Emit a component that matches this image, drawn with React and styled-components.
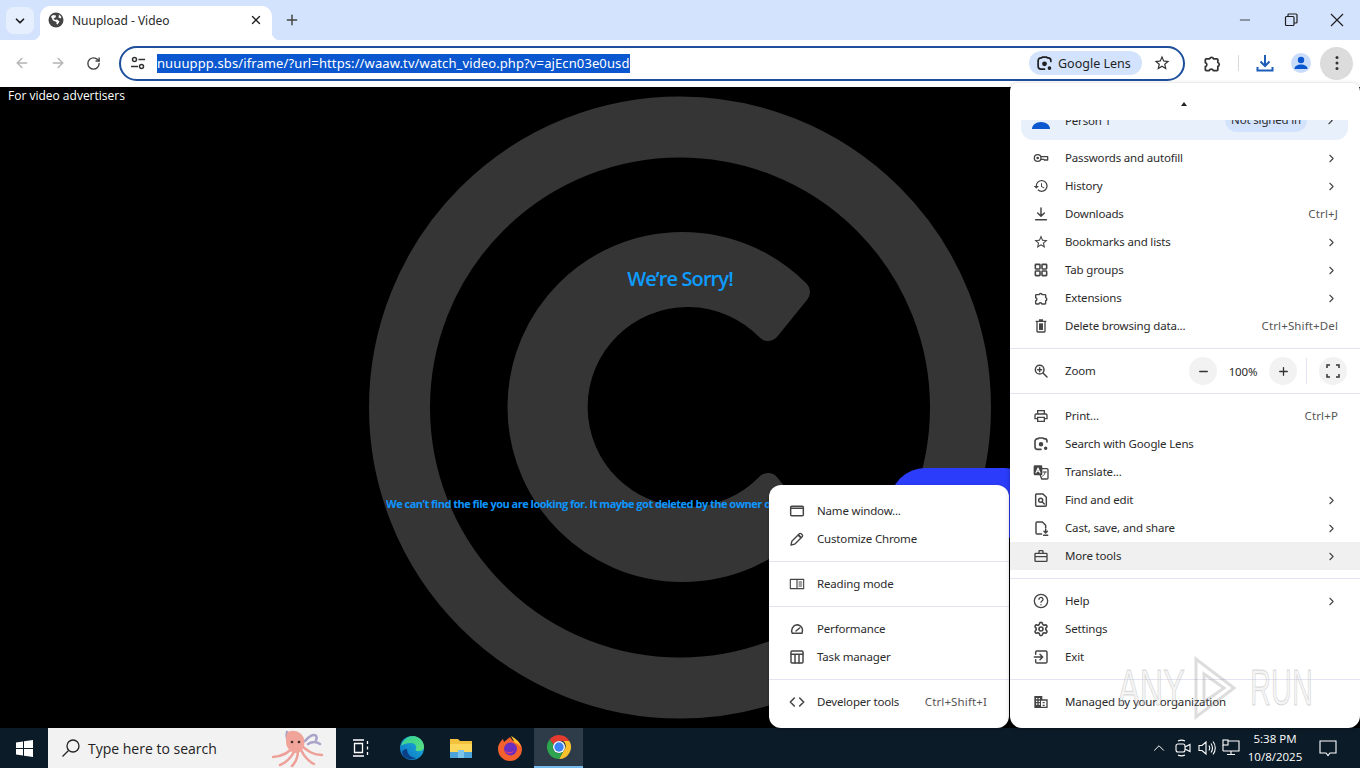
import React from "react";
import styled, { createGlobalStyle } from "styled-components";
import {
  ArrowLeft,
  ArrowRight,
  ChevronDown,
  ChevronRight,
  ChevronUp,
  Minus,
  Plus,
  RotateCw,
  Settings,
  X,
} from "lucide-react";

const UI_FONT = `"Noto Sans", "Open Sans", sans-serif`;

const GlobalStyle = createGlobalStyle`
  html, body { margin: 0; padding: 0; background: #000; }
  body { font-family: ${UI_FONT}; }
  * { box-sizing: border-box; }
`;

const Screen = styled.div`
  position: relative;
  width: 1360px;
  height: 768px;
  overflow: hidden;
  display: flex;
  flex-direction: column;
`;

/* tab strip */
const TabStrip = styled.div`
  height: 40px;
  background: #d3e3fd;
  display: flex;
  align-items: flex-end;
  padding-left: 6px;
  flex: none;
`;
const TabSearch = styled.div`
  width: 28px;
  height: 27px;
  margin-bottom: 6px;
  border-radius: 8px;
  background: #e6effd;
  display: flex;
  align-items: center;
  justify-content: center;
  color: #1f1f1f;
`;
const Tab = styled.div`
  position: relative;
  width: 232px;
  height: 34px;
  margin-left: 6px;
  background: #fff;
  border-radius: 10px 10px 0 0;
  display: flex;
  align-items: center;
  padding: 0 9px 6px 8px;
  font-size: 12px;
  color: #2a2a2a;
  &::before,
  &::after {
    content: "";
    position: absolute;
    bottom: 0;
    width: 8px;
    height: 8px;
  }
  &::before {
    left: -8px;
    background: radial-gradient(circle at 0 0, #d3e3fd 8px, #fff 8.5px);
  }
  &::after {
    right: -8px;
    background: radial-gradient(circle at 100% 0, #d3e3fd 8px, #fff 8.5px);
  }
`;
const TabTitle = styled.span`
  flex: 1;
  margin-left: 8px;
`;
const NewTab = styled.div`
  margin: 0 0 12px 12px;
  color: #444;
  display: flex;
`;
const WindowControls = styled.div`
  margin-left: auto;
  align-self: stretch;
  display: flex;
  align-items: center;
  gap: 31px;
  padding-right: 15px;
  color: #1f1f1f;
`;

/* toolbar */
const Toolbar = styled.div`
  height: 47px;
  background: #fff;
  display: flex;
  align-items: center;
  padding: 0 7px 1px 14px;
  flex: none;
`;
const NavButton = styled.div`
  width: 16px;
  margin-right: 20px;
  display: flex;
  justify-content: center;
  color: ${(p) => (p.$off ? "#b3b3b3" : "#444")};
`;
const Omnibox = styled.div`
  width: 1068px;
  height: 35px;
  margin-left: -3px;
  border: 2px solid #1d4f9c;
  border-radius: 18px;
  display: flex;
  align-items: center;
  padding: 0 12px 0 9px;
`;
const UrlText = styled.span`
  margin-left: 11px;
  height: 19px;
  line-height: 19px;
  background: #0b57d0;
  color: #fff;
  font-size: 13px;
  letter-spacing: 0.11px;
  white-space: nowrap;
`;
const LensChip = styled.div`
  margin-left: auto;
  height: 24px;
  width: 113px;
  border-radius: 12px;
  background: #d3e3fd;
  display: flex;
  align-items: center;
  gap: 5px;
  padding-left: 7px;
  font-size: 12.5px;
  color: #1f1f1f;
`;
const StarSlot = styled.div`
  margin-left: 11px;
  display: flex;
  color: #333;
`;
const ToolActions = styled.div`
  display: flex;
  align-items: center;
  margin-left: 17px;
  color: #333;
`;
const ActionDivider = styled.div`
  width: 1px;
  height: 16px;
  background: #d9d9d9;
  margin: 0 17px 0 16px;
`;
const Avatar = styled.div`
  width: 20px;
  height: 20px;
  border-radius: 50%;
  background: #c9dcf9;
  margin-left: 17px;
  display: flex;
  align-items: center;
  justify-content: center;
  color: #0b57d0;
`;
const KebabButton = styled.div`
  width: 33px;
  height: 33px;
  border-radius: 50%;
  background: #dcdcdc;
  margin-left: 9px;
  display: flex;
  align-items: center;
  justify-content: center;
`;

/* page */
const Page = styled.div`
  position: relative;
  flex: 1;
  background: #000;
  overflow: hidden;
  font-family: "Open Sans", sans-serif;
`;
const AdLabel = styled.div`
  position: relative;
  padding: 1px 0 0 8px;
  color: #fff;
  font-size: 12px;
  line-height: 16px;
`;
const CopyrightMark = styled.svg`
  position: absolute;
  left: 0;
  top: 0;
  width: 1360px;
  height: 641px;
`;
const Sorry = styled.h1`
  position: relative;
  margin: 165px 0 0;
  text-align: center;
  color: #0d9cff;
  font-size: 20px;
  line-height: 20px;
  font-weight: 600;
  letter-spacing: -0.9px;
`;
const Message = styled.p`
  position: relative;
  margin: 207px auto 0;
  width: 588px;
  white-space: nowrap;
  overflow: hidden;
  color: #0d96ff;
  font-size: 11px;
  line-height: 16px;
  font-weight: 700;
  letter-spacing: -0.5px;
`;
const RetryBlob = styled.div`
  position: absolute;
  left: 890px;
  top: 381px;
  width: 150px;
  height: 70px;
  border-radius: 35px;
  background: #2b3dfb;
`;

/* menus */
const MainMenu = styled.div`
  position: absolute;
  left: 1010px;
  top: 83px;
  width: 350px;
  height: 645px;
  background: #fff;
  border-radius: 8px 8px 12px 12px;
  color: #2b2b2b;
  font-size: 11.5px;
  letter-spacing: -0.17px;
  box-shadow: 0 1px 4px rgba(0, 0, 0, 0.3);
`;
const SubMenu = styled.div`
  position: absolute;
  left: 769px;
  top: 485px;
  width: 240px;
  height: 243px;
  padding: 12px 0;
  background: #fff;
  border-radius: 12px;
  color: #2b2b2b;
  font-size: 11.5px;
  letter-spacing: -0.17px;
  box-shadow: 0 1px 3px rgba(0, 0, 0, 0.3);
`;
const ScrollUp = styled.div`
  height: 37px;
  padding-top: 19px;
  display: flex;
  justify-content: center;
  & > i {
    width: 0;
    height: 0;
    border: 3.5px solid transparent;
    border-top: 0;
    border-bottom: 4px solid #222;
    margin-left: -2px;
  }
`;
const MenuBody = styled.div`
  height: 608px;
  overflow: hidden;
`;
const ProfileRow = styled.div`
  height: 40px;
  margin: -20px 12px 4px 11px;
  padding: 0 11px 0 11px;
  border-radius: 12px;
  background: #e8f0fb;
  display: flex;
  align-items: center;
`;
const ProfileName = styled.span`
  margin-left: 15px;
  flex: 1;
`;
const ProfileBadge = styled.span`
  height: 24px;
  line-height: 23px;
  padding: 0 6px;
  margin-right: 17px;
  border-radius: 12px;
  background: #d3e3fd;
`;
const Row = styled.div`
  height: 28px;
  display: flex;
  align-items: center;
  padding: ${(p) => (p.$sub ? "0 22px 0 20px" : "0 22px 0 23px")};
  background: ${(p) => (p.$active ? "#f0f0f0" : "transparent")};
`;
const RowIcon = styled.span`
  width: 16px;
  height: 16px;
  flex: none;
  display: flex;
  color: #444;
  margin-right: ${(p) => (p.$sub ? "12px" : "16px")};
`;
const RowLabel = styled.span`
  flex: 1;
  padding-bottom: 1px;
  white-space: nowrap;
`;
const Shortcut = styled.span`
  color: #555;
  padding-bottom: 1px;
  letter-spacing: 0.13px;
  white-space: nowrap;
`;
const Divider = styled.div`
  height: 1px;
  margin: 8px 0;
  background: #e2e3f3;
`;
const ZoomControls = styled.div`
  display: flex;
  align-items: center;
  margin-right: -9px;
`;
const RoundButton = styled.div`
  width: 28px;
  height: 28px;
  border-radius: 50%;
  background: #f2f2f2;
  display: flex;
  align-items: center;
  justify-content: center;
  color: #333;
`;
const ZoomValue = styled.span`
  width: 52px;
  text-align: center;
`;
const ZoomDivider = styled.div`
  width: 1px;
  height: 26px;
  background: #e2e3f3;
  margin: 0 12px 0 9px;
`;

/* watermark */
const Watermark = styled.div`
  position: absolute;
  left: 1118px;
  top: 656px;
  display: flex;
  align-items: center;
  pointer-events: none;
  font-family: "Liberation Sans", sans-serif;
`;
const WatermarkWord = styled.span`
  display: inline-block;
  width: ${(p) => p.$w}px;
  font-size: 50px;
  line-height: 60px;
  color: rgba(225, 225, 225, 0.35);
  -webkit-text-stroke: 1px rgba(120, 120, 120, 0.28);
  transform: scaleX(${(p) => p.$squeeze});
  transform-origin: left center;
  white-space: nowrap;
`;
const WatermarkPlay = styled.svg`
  margin: 0 12px 0 2px;
`;

/* taskbar */
const Taskbar = styled.div`
  height: 40px;
  flex: none;
  background: #0c1b28;
  display: flex;
  align-items: stretch;
  color: #fff;
`;
const StartButton = styled.div`
  width: 48px;
  display: flex;
  align-items: center;
  justify-content: center;
`;
const SearchBox = styled.div`
  width: 288px;
  background: #f2f2f2;
  display: flex;
  align-items: center;
  padding-left: 13px;
  color: #222;
  font-size: 14px;
  position: relative;
  font-family: "Open Sans", sans-serif;
`;
const SearchText = styled.span`
  margin-left: 7px;
`;
const Octopus = styled.svg`
  position: absolute;
  right: 8px;
  top: 0;
`;
const TaskApp = styled.div`
  width: 49px;
  display: flex;
  align-items: center;
  justify-content: center;
  background: ${(p) => (p.$active ? "#2d3c48" : "transparent")};
  border-bottom: ${(p) => (p.$active ? "2px solid #76b9ed" : "0")};
  margin-right: ${(p) => (p.$gap ? "2px" : "0")};
`;
const Tray = styled.div`
  margin-left: auto;
  margin-right: 8px;
  display: flex;
  align-items: center;
`;
const TraySlot = styled.div`
  width: 24px;
  display: flex;
  justify-content: center;
`;
const Clock = styled.div`
  width: 56px;
  margin-left: 4px;
  text-align: center;
  font-size: 11.5px;
  line-height: 18px;
  white-space: nowrap;
  font-family: "Open Sans", sans-serif;
`;
const Notify = styled.div`
  width: 49px;
  display: flex;
  justify-content: center;
`;

const Svg = ({ size = 16, children, stroke, ...rest }) => (
  <svg
    width={size}
    height={size}
    viewBox="0 0 24 24"
    fill={stroke ? "none" : "currentColor"}
    stroke={stroke ? "currentColor" : "none"}
    strokeWidth={stroke || 0}
    strokeLinecap="round"
    strokeLinejoin="round"
    {...rest}
  >
    {children}
  </svg>
);

const PuzzleIcon = ({ size }) => (
  <Svg size={size} stroke={2.1}>
    <path d="M5 7h4.2a2.4 2.4 0 0 1 4.6 0H18a1 1 0 0 1 1 1v3.4a2.4 2.4 0 0 1 0 4.6V20a1 1 0 0 1-1 1h-4.5a2.5 2.5 0 0 0-4.8 0H5a1 1 0 0 1-1-1v-3.6a2.5 2.5 0 0 0 0-4.8V8a1 1 0 0 1 1-1z" />
  </Svg>
);
const StarIcon = ({ size }) => (
  <Svg size={size}>
    <path d="M22 9.24l-7.19-.62L12 2 9.19 8.63 2 9.24l5.46 4.73L5.82 21 12 17.27 18.18 21l-1.63-7.03L22 9.24zM12 15.4l-3.76 2.27 1-4.28-3.32-2.88 4.38-.38L12 6.1l1.71 4.04 4.38.38-3.32 2.88 1 4.28L12 15.4z" />
  </Svg>
);
const LensIcon = ({ size }) => (
  <Svg size={size} stroke={2.4}>
    <path d="M8 4H7a4 4 0 0 0-4 4v8a4 4 0 0 0 4 4h5M16 4h1a4 4 0 0 1 4 4v1M8 4l1-1h6l1 1" />
    <circle cx="12" cy="12.5" r="2.2" fill="currentColor" />
    <circle cx="19" cy="18.5" r="1.4" fill="currentColor" />
  </Svg>
);

const icons = {
  key: (
    <Svg stroke={2}>
      <circle cx="7" cy="12" r="5" />
      <circle cx="7" cy="12" r="1" fill="currentColor" />
      <path d="M12 10h10v5h-5l-1-1h-4" />
    </Svg>
  ),
  history: (
    <Svg>
      <path d="M13 3a9 9 0 0 0-9 9H1l3.89 3.89.07.14L9 12H6c0-3.87 3.13-7 7-7s7 3.13 7 7-3.13 7-7 7c-1.93 0-3.68-.79-4.94-2.06l-1.42 1.42A8.954 8.954 0 0 0 13 21a9 9 0 0 0 0-18zm-1 5v5l4.28 2.54.72-1.21-3.5-2.08V8H12z" />
    </Svg>
  ),
  download: (
    <Svg stroke={2.2}>
      <path d="M12 3v12M7 10.5l5 5 5-5M4 20.5h16" />
    </Svg>
  ),
  star: <StarIcon />,
  groups: (
    <Svg stroke={2.4}>
      <rect x="3.5" y="3.5" width="7" height="7" rx="1" />
      <rect x="13.5" y="3.5" width="7" height="7" rx="1" />
      <rect x="3.5" y="13.5" width="7" height="7" rx="1" />
      <rect x="13.5" y="13.5" width="7" height="7" rx="1" />
    </Svg>
  ),
  puzzle: <PuzzleIcon />,
  trash: (
    <Svg>
      <path
        fillRule="evenodd"
        d="M9 2h6v2h5v2h-1v14a2 2 0 0 1-2 2H7a2 2 0 0 1-2-2V6H4V4h5V2zM7 6v14h10V6H7z"
      />
      <rect x="9" y="8" width="6" height="10" />
    </Svg>
  ),
  zoom: (
    <Svg stroke={2.2}>
      <circle cx="10" cy="10" r="6.5" />
      <path d="M15 15l6 6M10 7v6M7 10h6" />
    </Svg>
  ),
  print: (
    <Svg>
      <path d="M19 8h-1V3H6v5H5c-1.66 0-3 1.34-3 3v6h4v4h12v-4h4v-6c0-1.66-1.34-3-3-3zM8 5h8v3H8V5zm8 12v2H8v-4h8v2zm2-2v-2H6v2H4v-4c0-.55.45-1 1-1h14c.55 0 1 .45 1 1v4h-2z" />
    </Svg>
  ),
  lens: <LensIcon />,
  translate: (
    <Svg>
      <rect x="1" y="2" width="13" height="15" rx="2" />
      <path
        fill="none"
        stroke="currentColor"
        strokeWidth="2"
        d="M14 7h7a1.5 1.5 0 0 1 1.5 1.5V21a1.5 1.5 0 0 1-1.5 1.5h-8L11 17"
      />
      <path fill="none" stroke="#fff" strokeWidth="1.6" d="M4.5 13l3-7 3 7M5.5 11h4" />
      <path fill="none" stroke="currentColor" strokeWidth="1.5" d="M15 12h5M18 12c0 3-1.5 5-3.5 6" />
    </Svg>
  ),
  find: (
    <Svg stroke={2.2}>
      <path d="M6 3h9l5 5v12a1.5 1.5 0 0 1-1.5 1.5h-13A1.5 1.5 0 0 1 4 20V4.5A1.5 1.5 0 0 1 5.5 3z" />
      <circle cx="11.5" cy="12.5" r="3" />
      <path d="M14 15l3 3" />
    </Svg>
  ),
  cast: (
    <Svg stroke={2.2}>
      <path d="M13 21H6a1.5 1.5 0 0 1-1.5-1.5v-15A1.5 1.5 0 0 1 6 3h8l5 5v4" />
      <path d="M19 14v5M16.5 17l2.5 2.5 2.5-2.5M16 23h6" />
    </Svg>
  ),
  tools: (
    <Svg>
      <path
        fillRule="evenodd"
        d="M8 7V5a2 2 0 0 1 2-2h4a2 2 0 0 1 2 2v2h4a2 2 0 0 1 2 2v10a2 2 0 0 1-2 2H4a2 2 0 0 1-2-2V9a2 2 0 0 1 2-2h4zm2 0h4V5h-4v2zM4 9v3h16V9H4zm0 5v5h16v-5H4z"
      />
    </Svg>
  ),
  help: (
    <Svg stroke={2}>
      <circle cx="12" cy="12" r="10" />
      <path d="M9 9.5a3 3 0 0 1 6 .3c0 2-3 2.4-3 4.2M12 17.5v.1" />
    </Svg>
  ),
  settings: <Settings size={16} strokeWidth={2.4} />,
  exit: (
    <Svg stroke={2.2}>
      <path d="M4 8V5a2 2 0 0 1 2-2h13a2 2 0 0 1 2 2v14a2 2 0 0 1-2 2H6a2 2 0 0 1-2-2v-3M2 12h12M10.5 8l4 4-4 4" />
    </Svg>
  ),
  managed: (
    <Svg>
      <path fillRule="evenodd" d="M2 3h12v5h8v13H2V3zm10 11v5h8v-9h-8v4z" />
      <path fill="#fff" d="M4.5 6h2v2h-2zM8.5 6h2v2h-2zM4.5 10h2v2h-2zM8.5 10h2v2h-2zM4.5 14h2v2h-2zM8.5 14h2v2h-2z" />
      <path d="M14.5 12h3v2h-3zM14.5 16h3v2h-3z" />
    </Svg>
  ),
  windowIcon: (
    <Svg stroke={2.2}>
      <rect x="2.5" y="5" width="19" height="14" rx="1.5" />
      <path d="M2.5 8h19" />
    </Svg>
  ),
  pencil: (
    <Svg>
      <path d="M3 21l1.2-5.5L15.5 4.2a2 2 0 0 1 2.8 0l1.5 1.500a2 2 0 0 1 0 2.800L8.500 19.800z" fill="none" stroke="currentColor" strokeWidth="2" />
      <path d="M15 5l4 4-2 2-4-4z" />
    </Svg>
  ),
  reading: (
    <Svg stroke={1.7}>
      <path d="M12 5H2v14h10zM12 5h10v14H12M15 9h4M15 12h4M15 15h4" />
    </Svg>
  ),
  performance: (
    <Svg stroke={2.2}>
      <path d="M5 18.5A9 9 0 0 1 12 5.500a9 9 0 0 1 7.500 13zM10.500 15l5.500-4.500" />
    </Svg>
  ),
  task: (
    <Svg stroke={2.2}>
      <rect x="3" y="3" width="18" height="18" rx="1.5" />
      <path d="M3 8h18M9 8v13M15 8v13" />
    </Svg>
  ),
  devtools: (
    <Svg stroke={2.4}>
      <path d="M8 6l-6 6 6 6M16 6l6 6-6 6" />
    </Svg>
  ),
};

const mainSections = [
  [
    { icon: "key", label: "Passwords and autofill", more: true },
    { icon: "history", label: "History", more: true },
    { icon: "download", label: "Downloads", keys: "Ctrl+J" },
    { icon: "star", label: "Bookmarks and lists", more: true },
    { icon: "groups", label: "Tab groups", more: true },
    { icon: "puzzle", label: "Extensions", more: true },
    { icon: "trash", label: "Delete browsing data...", keys: "Ctrl+Shift+Del" },
  ],
  "zoom",
  [
    { icon: "print", label: "Print...", keys: "Ctrl+P" },
    { icon: "lens", label: "Search with Google Lens" },
    { icon: "translate", label: "Translate..." },
    { icon: "find", label: "Find and edit", more: true },
    { icon: "cast", label: "Cast, save, and share", more: true },
    { icon: "tools", label: "More tools", more: true, active: true },
  ],
  [
    { icon: "help", label: "Help", more: true },
    { icon: "settings", label: "Settings" },
    { icon: "exit", label: "Exit" },
  ],
  [{ icon: "managed", label: "Managed by your organization" }],
];

const subSections = [
  [
    { icon: "windowIcon", label: "Name window..." },
    { icon: "pencil", label: "Customize Chrome" },
  ],
  [{ icon: "reading", label: "Reading mode" }],
  [
    { icon: "performance", label: "Performance" },
    { icon: "task", label: "Task manager" },
  ],
  [{ icon: "devtools", label: "Developer tools", keys: "Ctrl+Shift+I" }],
];

const MenuRow = ({ item, sub }) => (
  <Row $active={item.active} $sub={sub}>
    <RowIcon $sub={sub}>{icons[item.icon]}</RowIcon>
    <RowLabel>{item.label}</RowLabel>
    {item.keys && <Shortcut>{item.keys}</Shortcut>}
    {item.more && <ChevronRight size={13} color="#444" strokeWidth={2} />}
  </Row>
);

const ZoomRow = () => (
  <Row>
    <RowIcon>{icons.zoom}</RowIcon>
    <RowLabel>Zoom</RowLabel>
    <ZoomControls>
      <RoundButton>
        <Minus size={13} strokeWidth={2.4} />
      </RoundButton>
      <ZoomValue>100%</ZoomValue>
      <RoundButton>
        <Plus size={13} strokeWidth={2.4} />
      </RoundButton>
      <ZoomDivider />
      <RoundButton>
        <svg width="14" height="14" viewBox="0 0 14 14" fill="none" stroke="#333" strokeWidth="1.5">
          <path d="M1 4V1h3M10 1h3v3M13 10v3h-3M4 13H1v-3" />
        </svg>
      </RoundButton>
    </ZoomControls>
  </Row>
);

const Globe = () => (
  <svg width="16" height="16" viewBox="0 0 16 16">
    <circle cx="8" cy="8" r="7.5" fill="#444" />
    <path
      fill="#fff"
      d="M3 4.5l2-1.5 3 .5-.5 2-2 1 1.5 1.5 2-.5 2.5 2-2 3-1-.5V10L5 8.5zM11 2.5l2.5 2.5-1 1.5-2-1z"
    />
  </svg>
);

const EdgeIcon = () => (
  <svg width="26" height="26" viewBox="0 0 26 26">
    <defs>
      <linearGradient id="edgeA" x1="0" y1="1" x2="1" y2="0">
        <stop offset="0" stopColor="#0b6fc4" />
        <stop offset="1" stopColor="#1fb6d8" />
      </linearGradient>
      <linearGradient id="edgeB" x1="0" y1="0" x2="1" y2="1">
        <stop offset="0" stopColor="#2fd09a" />
        <stop offset="1" stopColor="#5fe07a" />
      </linearGradient>
    </defs>
    <circle cx="13" cy="13" r="12" fill="url(#edgeA)" />
    <path d="M2 11C4 4 10 1 14 1c6 0 11 5 11 11 0 3-3 4-6 4-2 0-3-1-2-2 1-3-1-6-5-6-4 0-8 1-10 3z" fill="url(#edgeB)" />
    <path d="M8 14c0 5 4 9 9 9-6 3-13 0-14-6 1-2 3-3 5-3z" fill="#0a3f86" />
  </svg>
);

const FolderIcon = () => (
  <svg width="24" height="24" viewBox="0 0 24 24">
    <path d="M1 3h8l2 2h12v17H1z" fill="#f2c23e" />
    <path d="M1 8h22v14H1z" fill="#fbd75b" />
    <rect x="1" y="16" width="22" height="6" fill="#4da3d8" />
    <rect x="9" y="14" width="6" height="8" fill="#7cc4ea" />
  </svg>
);

const FirefoxIcon = () => (
  <svg width="26" height="26" viewBox="0 0 26 26">
    <path d="M13 2l3 4 4-1c3 3 5 6 5 9a12 12 0 0 1-24 0C1 9 4 6 6 4l1 3c2-2 4-3 6-5z" fill="#f4612c" />
    <path d="M14 1c4 2 8 5 10 11-2-2-4-4-6-4z" fill="#ffc02c" />
    <circle cx="13.5" cy="14" r="6.5" fill="#6a2fc0" />
    <path d="M8 15c2 3 7 3 9 0-1 4-8 5-9 0z" fill="#e83a7a" />
  </svg>
);

const ChromeIcon = () => (
  <svg width="26" height="26" viewBox="0 0 26 26">
    <path d="M13 1a12 12 0 0 1 10.4 6H13a6 6 0 0 0-5.5 3.5L3.6 5.5A12 12 0 0 1 13 1z" fill="#e33b2e" />
    <path d="M23.4 7A12 12 0 0 1 13 25l5.2-9a6 6 0 0 0-1-9z" fill="#fbc02d" />
    <path d="M3.6 5.5A12 12 0 0 0 13 25l5.2-9a6 6 0 0 1-10.7-5.5z" fill="#2ea44f" />
    <circle cx="13" cy="13" r="6" fill="#fff" />
    <circle cx="13" cy="13" r="4.7" fill="#3b82f6" />
  </svg>
);

const OctopusArt = () => (
  <Octopus width="60" height="40" viewBox="0 0 60 40">
    <g fill="none" stroke="#ee9f97" strokeWidth="2.5" strokeLinecap="round">
      <path d="M26 18C22 24 16 28 5 29" />
      <path d="M27 22C24 28 20 34 12 37" />
      <path d="M30 22c0 6-2 12-6 16" />
      <path d="M33 22c3 6 7 11 13 14" />
      <path d="M35 19c5 4 10 8 19 8" />
    </g>
    <g fill="none" stroke="#a9a3c9" strokeWidth="2.5" strokeLinecap="round">
      <path d="M22 14c-3-2-4-6-3-10" />
      <path d="M37 13c3-3 5-6 9-6 3 0 3 3 2 5" />
      <path d="M40 16c5-3 9-2 12 0" />
    </g>
    <path d="M20 4c6-3 14 0 16 7 2 8-3 14-8 14s-10-5-10-11c0-4 0-8 2-10z" fill="#f0a49a" />
    <circle cx="24" cy="14" r="1.3" fill="#3a2a2a" />
    <circle cx="31" cy="14" r="1.3" fill="#3a2a2a" />
  </Octopus>
);

export default function App() {
  return (
    <Screen>
      <GlobalStyle />
      <TabStrip>
        <TabSearch>
          <ChevronDown size={14} strokeWidth={3} />
        </TabSearch>
        <Tab>
          <Globe />
          <TabTitle>Nuupload - Video</TabTitle>
          <X size={14} strokeWidth={2.4} color="#222" />
        </Tab>
        <NewTab>
          <Plus size={16} strokeWidth={2.2} />
        </NewTab>
        <WindowControls>
          <Minus size={16} strokeWidth={1.2} />
          <svg width="14" height="14" viewBox="0 0 14 14" fill="none" stroke="#1f1f1f" strokeWidth="1.2">
            <rect x="1.5" y="3.5" width="8.5" height="9" rx="1" />
            <path d="M4 3.5V2a1 1 0 0 1 1-1h7a1 1 0 0 1 1 1v7a1 1 0 0 1-1 1h-2" />
          </svg>
          <svg width="16" height="16" viewBox="0 0 16 16" stroke="#1f1f1f" strokeWidth="1.2">
            <path d="M2 2l12 12M14 2L2 14" />
          </svg>
        </WindowControls>
      </TabStrip>

      <Toolbar>
        <NavButton $off>
          <ArrowLeft size={16} strokeWidth={2} />
        </NavButton>
        <NavButton $off>
          <ArrowRight size={16} strokeWidth={2} />
        </NavButton>
        <NavButton>
          <RotateCw size={15} strokeWidth={2.2} />
        </NavButton>
        <Omnibox>
          <svg width="16" height="16" viewBox="0 0 16 16" fill="none" stroke="#333" strokeWidth="1.5">
            <circle cx="4.5" cy="4.5" r="2" />
            <path d="M8.5 4.5H15M1 11.5h7" />
            <circle cx="11.5" cy="11.5" r="2" />
          </svg>
          <UrlText>nuuuppp.sbs/iframe/?url=https://waaw.tv/watch_video.php?v=ajEcn03e0usd</UrlText>
          <LensChip>
            <LensIcon size={17} />
            Google Lens
          </LensChip>
          <StarSlot>
            <StarIcon size={18} />
          </StarSlot>
        </Omnibox>
        <ToolActions>
          <PuzzleIcon size={20} />
          <ActionDivider />
          <svg width="18" height="18" viewBox="0 0 18 18" fill="none" stroke="#1d5fb8" strokeWidth="2">
            <path d="M9 1v11M4.5 7.5L9 12l4.5-4.5M1.5 13v3.5h15V13" />
          </svg>
          <Avatar>
            <svg width="14" height="14" viewBox="0 0 14 14" fill="currentColor">
              <circle cx="7" cy="4" r="3.2" />
              <path d="M0.5 13c0-3 3-4.5 6.5-4.5s6.5 1.5 6.5 4.5z" />
            </svg>
          </Avatar>
          <KebabButton>
            <svg width="4" height="16" viewBox="0 0 4 16" fill="#333">
              <circle cx="2" cy="2.5" r="1.5" />
              <circle cx="2" cy="8" r="1.5" />
              <circle cx="2" cy="13.5" r="1.5" />
            </svg>
          </KebabButton>
        </ToolActions>
      </Toolbar>

      <Page>
        <CopyrightMark viewBox="0 0 1360 641">
          <circle cx="680" cy="320.5" r="280.5" fill="none" stroke="#353535" strokeWidth="61" />
          <path
            d="M798 205 A163 163 0 1 0 798 435 L768 398 A112 112 0 1 1 768 242 Z"
            fill="#353535"
            stroke="#353535"
            strokeWidth="24"
            strokeLinejoin="round"
          />
        </CopyrightMark>
        <RetryBlob />
        <AdLabel>For video advertisers</AdLabel>
        <Sorry>We’re Sorry!</Sorry>
        <Message>
          We can’t find the file you are looking for. It maybe got deleted by the owner or was removed due a copyright violation.
        </Message>
      </Page>

      <Taskbar>
        <StartButton>
          <svg width="17" height="17" viewBox="0 0 17 17" fill="#fff">
            <path d="M0 2.4L7 1.4V8H0zM8 1.3L17 0V8H8zM0 9h7v6.6l-7-1zM8 9h9v8l-9-1.3z" />
          </svg>
        </StartButton>
        <SearchBox>
          <svg width="20" height="20" viewBox="0 0 20 20" fill="none" stroke="#222" strokeWidth="1.3">
            <circle cx="12" cy="8" r="6" />
            <path d="M7.5 12.5L1.5 18.5" />
          </svg>
          <SearchText>Type here to search</SearchText>
          <OctopusArt />
        </SearchBox>
        <TaskApp $gap>
          <svg width="18" height="18" viewBox="0 0 18 18" fill="none" stroke="#fff" strokeWidth="1.3">
            <path d="M1 1h11M1 17h11M2.5 4.5h8v9h-8zM15.5 2v3M15.5 7.5v3M15.5 13v3" />
          </svg>
        </TaskApp>
        <TaskApp>
          <EdgeIcon />
        </TaskApp>
        <TaskApp>
          <FolderIcon />
        </TaskApp>
        <TaskApp>
          <FirefoxIcon />
        </TaskApp>
        <TaskApp $active>
          <ChromeIcon />
        </TaskApp>
        <Tray>
          <TraySlot>
            <ChevronUp size={18} strokeWidth={1.3} />
          </TraySlot>
          <TraySlot>
            <svg width="16" height="18" viewBox="0 0 16 18" fill="none" stroke="#fff" strokeWidth="1.1">
              <rect x="1" y="5" width="9" height="8" rx="2" />
              <path d="M10 8l5-2.5v7L10 10M3 2c2-1 5-1 7 0M3 16c2 1 5 1 7 0" />
            </svg>
          </TraySlot>
          <TraySlot>
            <svg width="18" height="18" viewBox="0 0 18 18" fill="none" stroke="#fff" strokeWidth="1.1">
              <path d="M1 6.5h3L8 3v12l-4-3.5H1zM11 6.5c1 1.5 1 3.5 0 5M13 4.5c2 2.5 2 6.5 0 9M15 2.5c3 3.5 3 9.5 0 13" />
            </svg>
          </TraySlot>
          <TraySlot>
            <svg width="18" height="18" viewBox="0 0 18 18" fill="none" stroke="#fff" strokeWidth="1.1">
              <path d="M4 2h13v10H1M9 12v3M5 15.5h8" />
              <rect x="1" y="1" width="5" height="5" fill="#0c1b28" />
              <path d="M1 6v6" />
            </svg>
          </TraySlot>
          <Clock>
            5:38 PM
            <br />
            10/8/2025
          </Clock>
          <Notify>
            <svg width="18" height="18" viewBox="0 0 18 18" fill="none" stroke="#fff" strokeWidth="1.1">
              <path d="M1 2h16v12h-6l-2 2.5L7 14H1z" />
            </svg>
          </Notify>
        </Tray>
      </Taskbar>

      <SubMenu>
        {subSections.map((section, i) => (
          <React.Fragment key={i}>
            {i > 0 && <Divider />}
            {section.map((item) => (
              <MenuRow key={item.label} item={item} sub />
            ))}
          </React.Fragment>
        ))}
      </SubMenu>

      <MainMenu>
        <ScrollUp>
          <i />
        </ScrollUp>
        <MenuBody>
          <ProfileRow>
            <svg width="18" height="18" viewBox="0 0 18 18" fill="#0b57d0">
              <path d="M0 18c0-4 4-7 9-7s9 3 9 7z" />
            </svg>
            <ProfileName>Person 1</ProfileName>
            <ProfileBadge>Not signed in</ProfileBadge>
            <ChevronRight size={13} color="#444" strokeWidth={2} />
          </ProfileRow>
          {mainSections.map((section, i) => (
            <React.Fragment key={i}>
              {i > 0 && <Divider />}
              {section === "zoom" ? (
                <ZoomRow />
              ) : (
                section.map((item) => <MenuRow key={item.label} item={item} />)
              )}
            </React.Fragment>
          ))}
        </MenuBody>
      </MainMenu>

      <Watermark>
        <WatermarkWord $w={68} $squeeze={0.65}>ANY</WatermarkWord>
        <WatermarkPlay width="50" height="64" viewBox="0 0 50 64" fill="none" stroke="rgba(120,120,120,0.25)" strokeWidth="3">
          <path d="M8 3v58l38-29zM16 18v28l20-14z" />
        </WatermarkPlay>
        <WatermarkWord $w={70} $squeeze={0.58}>RUN</WatermarkWord>
      </Watermark>
    </Screen>
  );
}
